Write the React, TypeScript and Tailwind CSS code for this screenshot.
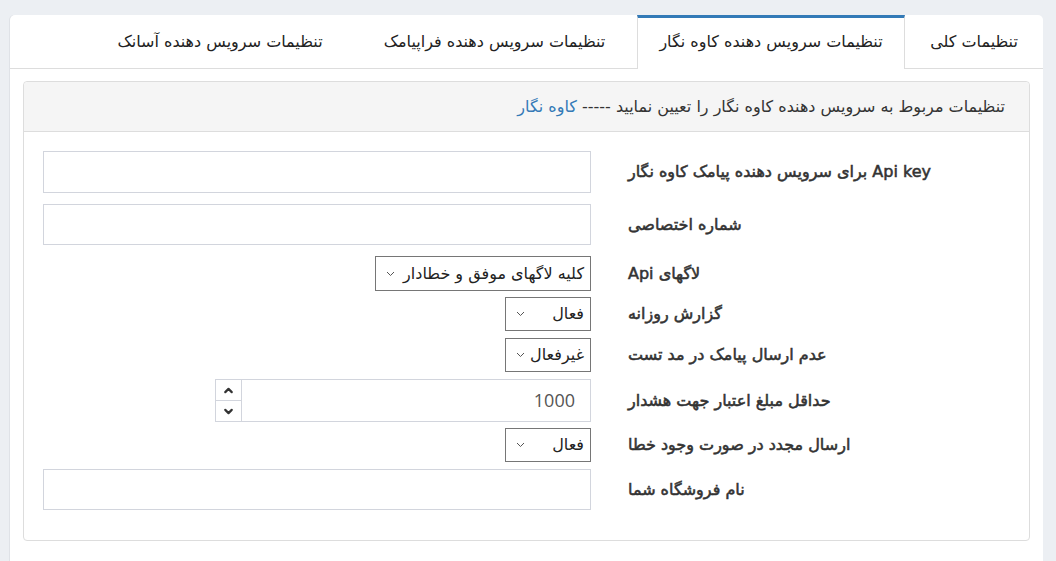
import { ChevronDown, ChevronUp } from "lucide-react";

const tabs = [
  { label: "تنظیمات کلی", active: false, width: "w-[138px]" },
  { label: "تنظیمات سرویس دهنده کاوه نگار", active: true, width: "w-[268px]" },
  { label: "تنظیمات سرویس دهنده فراپیامک", active: false, width: "w-[285px]" },
  { label: "تنظیمات سرویس دهنده آسانک", active: false, width: "w-[264px]" },
];

function Caret() {
  return (
    <svg width="9" height="6" viewBox="0 0 9 6" className="shrink-0">
      <path d="M1 1l3.5 3.5L8 1" fill="none" stroke="#555" strokeWidth="1" />
    </svg>
  );
}

function FakeSelect({ value, width, height }: { value: string; width: string; height: string }) {
  return (
    <div
      className={`flex items-center justify-between border border-[#767676] bg-white pr-[6px] pl-[10px] text-[16px] text-[#222] ${width} ${height}`}
    >
      <span>{value}</span>
      <Caret />
    </div>
  );
}

function Row({ label, children, className }: { label: string; children: React.ReactNode; className: string }) {
  return (
    <div className={`flex items-center ${className}`}>
      <label className="flex-1 pl-[37px] text-left text-[16px] text-[#333] [-webkit-text-stroke:0.55px_#333]">
        {label}
      </label>
      <div className="w-[548px]">{children}</div>
    </div>
  );
}

export default function App() {
  return (
    <div
      dir="rtl"
      className="min-h-[561px] overflow-hidden bg-[#eceff3] pt-[15px] pr-[13px] pl-[10px]"
      style={{ fontFamily: '"DejaVu Sans", sans-serif' }}
    >
      <div className="h-[560px] rounded-t-[5px] bg-white shadow-[-1px_0_0_#dfe2e7]">
        <ul className="flex h-[54px] border-b border-[#ddd]">
          {tabs.map((tab) => (
            <li
              key={tab.label}
              className={
                tab.active
                  ? `-mb-px flex items-center justify-center border-x border-t-[3px] border-x-[#ddd] border-t-[#337ab7] bg-white pb-[3px] text-[16px] text-[#222] ${tab.width}`
                  : `flex items-center justify-center text-[16px] text-[#222] ${tab.width}`
              }
            >
              {tab.label}
            </li>
          ))}
        </ul>

        <div className="px-[13px] pt-[12px]">
          <div className="rounded-[4px] border border-[#ddd]">
            <div className="flex h-[50px] items-center rounded-t-[4px] border-b border-[#ddd] bg-[#f5f5f5] px-[24px] text-[16px] text-[#333]">
              <span>
                تنظیمات مربوط به سرویس دهنده کاوه نگار را تعیین نمایید -----{" "}
                <a className="text-[#337ab7]">کاوه نگار</a>
              </span>
            </div>

            <div className="px-[19px] pt-[19px] pb-[30px]">
              <Row label="Api key برای سرویس دهنده پیامک کاوه نگار" className="mb-[11px]">
                <input className="block h-[42px] w-full border border-[#d2d5dd] bg-white outline-none" />
              </Row>
              <Row label="شماره اختصاصی" className="mb-[11px]">
                <input className="block h-[41px] w-full border border-[#d2d5dd] bg-white outline-none" />
              </Row>
              <Row label="لاگهای Api" className="mb-[6px]">
                <FakeSelect value="کلیه لاگهای موفق و خطادار" width="w-[216px]" height="h-[35px]" />
              </Row>
              <Row label="گزارش روزانه" className="mb-[7px]">
                <FakeSelect value="فعال" width="w-[86px]" height="h-[34px]" />
              </Row>
              <Row label="عدم ارسال پیامک در مد تست" className="mb-[7px]">
                <FakeSelect value="غیرفعال" width="w-[86px]" height="h-[34px]" />
              </Row>
              <Row label="حداقل مبلغ اعتبار جهت هشدار" className="mb-[6px]">
                <div className="flex h-[43px] w-[376px] border border-[#d2d5dd] bg-white">
                  <div
                    className="flex flex-1 items-center pr-[15px] text-[18px] text-[#555]"
                    style={{ fontFamily: '"Open Sans", sans-serif' }}
                  >
                    1000
                  </div>
                  <div className="flex w-[26px] flex-col border-r border-[#d2d5dd]">
                    <div className="flex flex-1 items-center justify-center border-b border-[#d2d5dd]">
                      <ChevronUp size={13} strokeWidth={4} color="#333" />
                    </div>
                    <div className="flex flex-1 items-center justify-center">
                      <ChevronDown size={13} strokeWidth={4} color="#333" />
                    </div>
                  </div>
                </div>
              </Row>
              <Row label="ارسال مجدد در صورت وجود خطا" className="mb-[7px]">
                <FakeSelect value="فعال" width="w-[86px]" height="h-[34px]" />
              </Row>
              <Row label="نام فروشگاه شما" className="">
                <input className="block h-[41px] w-full border border-[#d2d5dd] bg-white outline-none" />
              </Row>
            </div>
          </div>
        </div>
      </div>
    </div>
  );
}
